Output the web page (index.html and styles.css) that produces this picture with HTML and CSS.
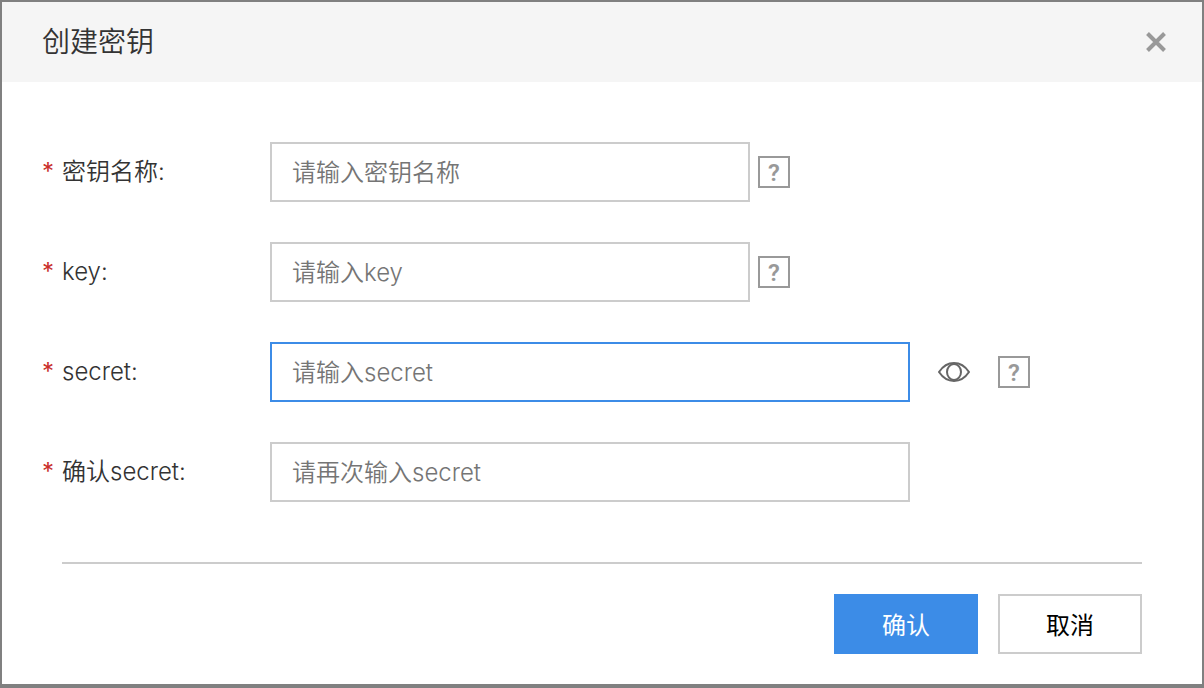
FILE: index.html
```html
<!DOCTYPE html>
<html lang="zh-CN">
<head>
    <meta charset="UTF-8" />
    <meta name="viewport" content="width=device-width, initial-scale=1.0"/>
    <title>创建密钥</title>
    <link rel="stylesheet" href="styles.css">
</head>
<body>
    <div class="dialog" role="dialog" aria-labelledby="dialogTitle">
        <div class="dialog-header">
            <h1 id="dialogTitle">创建密钥</h1>
            <button type="button" class="close" aria-label="关闭">
                <svg width="24" height="24" viewBox="0 0 24 24"><path d="M3.5 3.5L20.5 20.5M20.5 3.5L3.5 20.5"/></svg>
            </button>
        </div>

        <form class="dialog-body">
            <div class="row">
                <label for="keyName"><span class="required">*</span>密钥名称:</label>
                <input type="text" id="keyName" placeholder="请输入密钥名称">
                <button type="button" class="help" aria-label="帮助">?</button>
            </div>
            <div class="row">
                <label for="key"><span class="required">*</span>key:</label>
                <input type="text" id="key" placeholder="请输入key">
                <button type="button" class="help" aria-label="帮助">?</button>
            </div>
            <div class="row">
                <label for="secret"><span class="required">*</span>secret:</label>
                <input type="password" id="secret" class="wide active" placeholder="请输入secret">
                <button type="button" class="eye" aria-label="显示">
                    <svg width="32" height="24" viewBox="0 0 32 24">
                        <path d="M1 12C5 6 10 3 16 3S27 6 31 12C27 18 22 21 16 21S5 18 1 12Z"/>
                        <ellipse cx="16" cy="12" rx="7" ry="8"/>
                    </svg>
                </button>
                <button type="button" class="help" aria-label="帮助">?</button>
            </div>
            <div class="row">
                <label for="confirmSecret"><span class="required">*</span>确认secret:</label>
                <input type="password" id="confirmSecret" class="wide" placeholder="请再次输入secret">
            </div>

            <div class="dialog-footer">
                <button type="submit" class="btn primary">确认</button>
                <button type="button" class="btn">取消</button>
            </div>
        </form>
    </div>
</body>
</html>
```

FILE: styles.css
```css
* {
    box-sizing: border-box;
}

body {
    font-family: Inter, 'Noto Sans CJK SC', sans-serif;
    font-size: 24px;
    font-weight: 350;
    line-height: 32px;
    color: #333;
    background-color: #808080;
    margin: 0;
    padding: 2px 2px 4px;
}

button, input {
    font: inherit;
    border-radius: 0;
    margin: 0;
}

button {
    cursor: pointer;
}

svg {
    display: block;
    fill: none;
}

.dialog {
    background-color: #fff;
}

.dialog-header {
    display: flex;
    justify-content: space-between;
    align-items: center;
    height: 80px;
    padding: 0 34px 0 40px;
    background-color: #f5f5f5;
}

h1 {
    margin: 0;
    font-size: 28px;
    font-weight: 350;
}

.close, .eye {
    padding: 0;
    border: none;
    background: none;
}

.close svg {
    stroke: #999;
    stroke-width: 4;
}

.eye {
    margin: 0 20px;
}

.eye svg {
    stroke: #666;
    stroke-width: 2;
}

.dialog-body {
    display: flex;
    flex-direction: column;
    gap: 40px;
    padding: 60px 40px 30px;
}

.row {
    display: flex;
    align-items: center;
    gap: 8px;
}

label {
    flex: 0 0 220px;
    display: flex;
    align-items: center;
}

.required {
    width: 20px;
    color: #c9302c;
    font-weight: 400;
}

input {
    flex: 0 1 480px;
    min-width: 0;
    height: 60px;
    padding: 0 20px;
    border: 2px solid #ccc;
    background-color: #fff;
    color: #333;
    outline: none;
}

input.wide {
    flex-basis: 640px;
}

input.active, input:focus {
    border-color: #3c8ce7;
}

input::placeholder {
    color: #757575;
}

.help {
    width: 32px;
    height: 32px;
    padding: 2px 0 0;
    border: 2px solid #999;
    background-color: #fff;
    color: #999;
    font-family: Roboto, sans-serif;
    font-weight: 600;
    line-height: 24px;
}

.dialog-footer {
    display: flex;
    justify-content: flex-end;
    gap: 20px;
    margin: 20px 20px 0;
    padding-top: 30px;
    border-top: 2px solid #ccc;
}

.btn {
    width: 144px;
    height: 60px;
    padding: 4px 0 0;
    border: 2px solid #ccc;
    background-color: #fff;
    color: #000;
    font-weight: 400;
}

.btn.primary {
    border-color: #3c8ce7;
    background-color: #3c8ce7;
    color: #fff;
}
```
